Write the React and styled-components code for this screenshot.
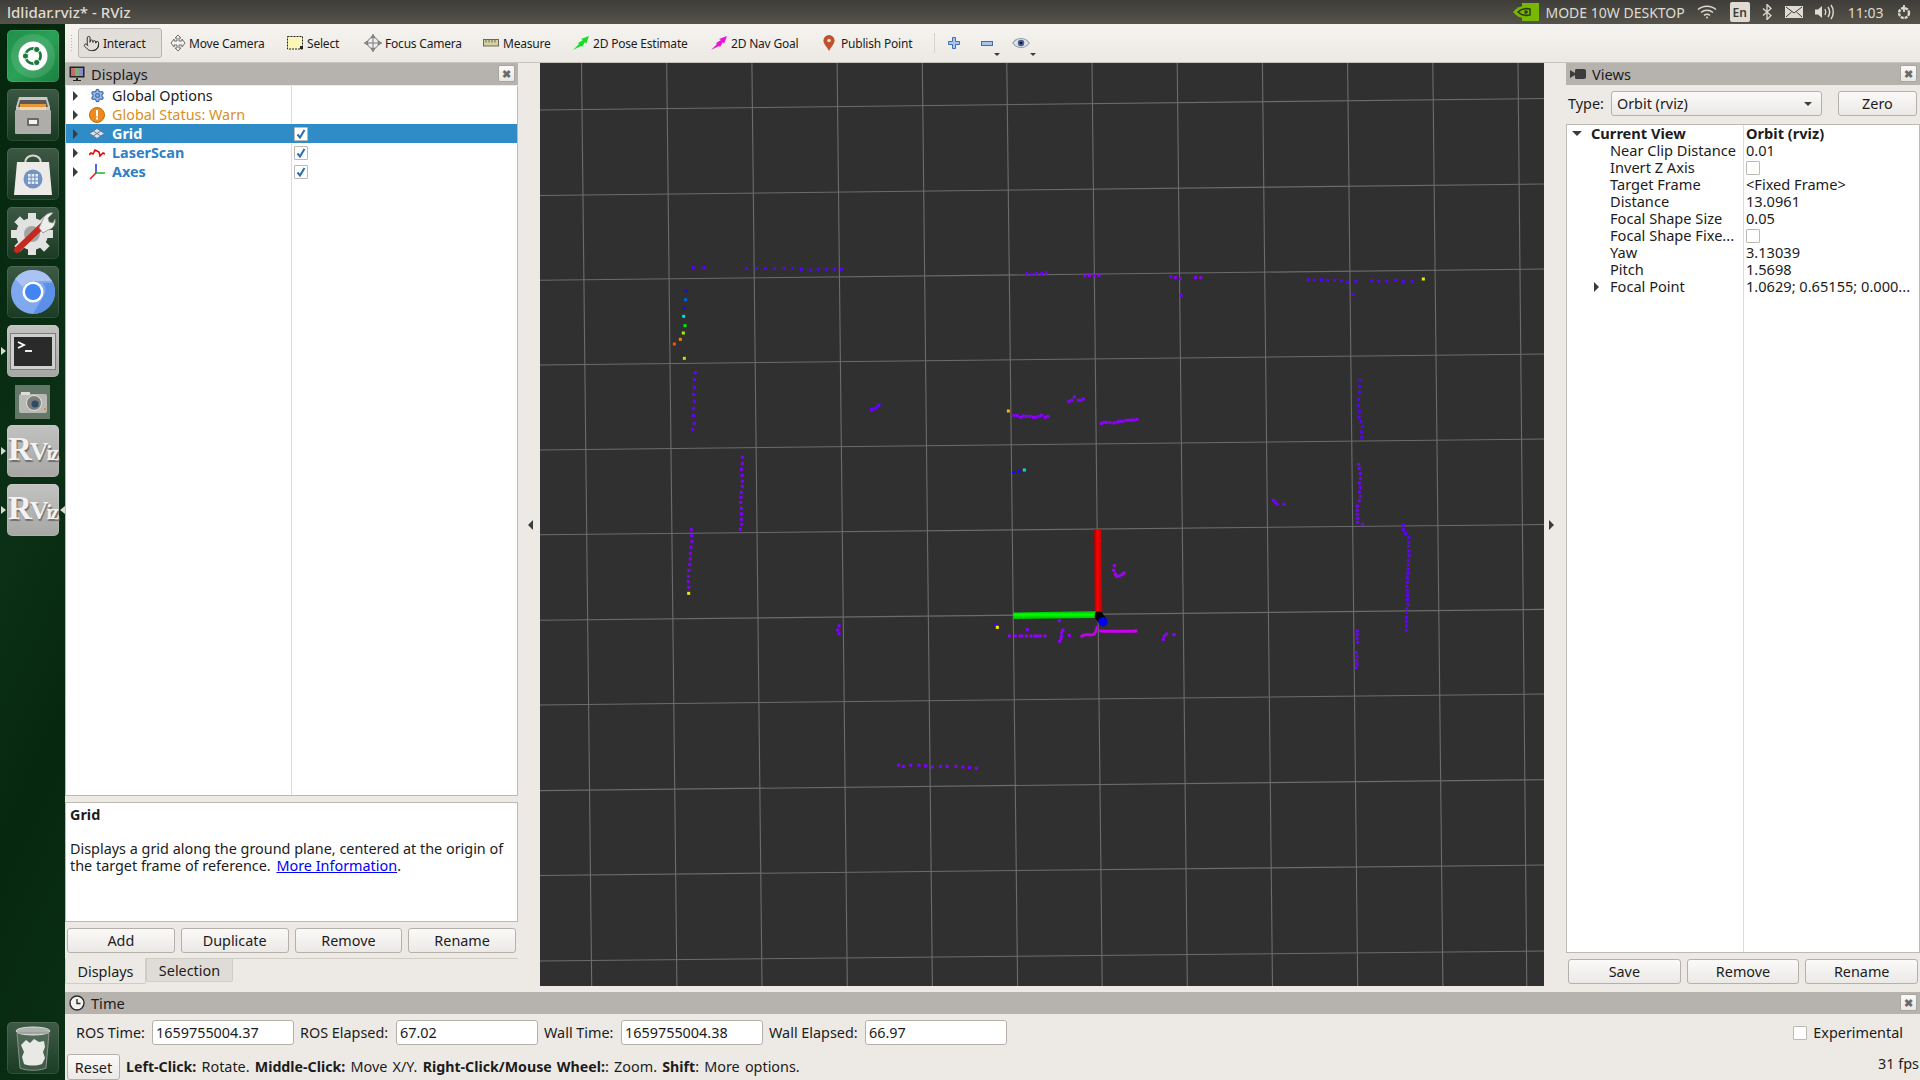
import React from "react";
import styled, { createGlobalStyle } from "styled-components";
import { Pointer, Settings } from "lucide-react";

const GlobalStyle = createGlobalStyle`
  html, body { margin: 0; padding: 0; width: 1920px; height: 1080px; overflow: hidden; }
  body { font-family: "Noto Sans", "Open Sans", sans-serif; font-size: 14.4px; color: #1c1c1c; background: #edeae5; }
  * { box-sizing: border-box; }
`;

const Screen = styled.div`
  width: 1920px;
  height: 1080px;
  display: flex;
  flex-direction: column;
`;

/* ---------- top bar ---------- */
const TopBar = styled.div`
  height: 24px;
  flex: none;
  display: flex;
  align-items: center;
  justify-content: space-between;
  padding: 0 8px 0 7px;
  background: linear-gradient(#3e3d39, #55534a);
  color: #dfdbd2;
`;
const WindowTitle = styled.div`
  font-size: 15px;
  font-weight: 500;
`;
const Tray = styled.div`
  display: flex;
  align-items: center;
  gap: 12.5px;
`;
const TrayText = styled.span`
  font-size: 14px;
  white-space: nowrap;
`;
const LogoSlot = styled.div`
  display: flex;
  margin-right: -6px;
`;
const LangBox = styled.div`
  width: 20px;
  height: 20px;
  border-radius: 2px;
  background: #dfdbd2;
  color: #3c3b37;
  font-size: 12px;
  font-weight: 600;
  display: flex;
  align-items: center;
  justify-content: center;
`;

/* ---------- launcher ---------- */
const Body = styled.div`
  flex: 1;
  display: flex;
  min-height: 0;
`;
const Launcher = styled.div`
  width: 65px;
  flex: none;
  display: flex;
  flex-direction: column;
  align-items: center;
  gap: 7px;
  padding: 6px 0;
  background: linear-gradient(115deg, #04260d, #0b3015 45%, #06280f 70%, #0a2f14);
`;
const Tile = styled.div`
  position: relative;
  width: 52px;
  height: 52px;
  flex: none;
  border-radius: 5px;
  display: flex;
  align-items: center;
  justify-content: center;
  background: ${(p) =>
    p.$kind === "ubuntu"
      ? "linear-gradient(135deg, #1f8f49, #2aa257 50%, #197f3f)"
      : p.$kind === "lit"
      ? "linear-gradient(#c2c2c0, #a6a6a4)"
      : "linear-gradient(rgba(255,255,255,.22), rgba(255,255,255,.07))"};
  box-shadow: inset 0 0 0 1px rgba(255, 255, 255, 0.1);
`;
const CameraTile = styled(Tile)`
  width: 35px;
  height: 34px;
  border-radius: 0;
  margin-top: 1px;
  margin-bottom: -1px;
  background: #64786a;
  box-shadow: none;
`;
const TrashTile = styled(Tile)`
  margin-top: auto;
`;
const Pip = styled.i`
  position: absolute;
  top: 50%;
  margin-top: -4px;
  width: 0;
  height: 0;
  border-top: 4px solid transparent;
  border-bottom: 4px solid transparent;
  ${(p) =>
    p.$side === "right"
      ? "right: -6px; border-right: 5px solid #d8d8d8;"
      : "left: -6px; border-left: 5px solid #d8d8d8;"}
`;
const RvizMark = styled.span`
  font-family: "Liberation Serif", serif;
  font-weight: 700;
  color: #f2f2f2;
  font-size: 26px;
  letter-spacing: -2px;
  line-height: 30px;
  text-shadow: 1px 2px 1px #6e6e6e;
  big { font-size: 33px; }
  small { font-size: 20px; }
`;

/* ---------- main area ---------- */
const Main = styled.div`
  flex: 1;
  min-width: 0;
  display: flex;
  flex-direction: column;
`;
const Toolbar = styled.div`
  height: 39px;
  flex: none;
  display: flex;
  align-items: center;
  padding: 0 0 0 5px;
  border-bottom: 1px solid #c6c2bc;
  background: linear-gradient(#f6f4f0, #ece9e4);
`;
const Grip = styled.div`
  width: 4px;
  height: 18px;
  margin-right: 4px;
  background-image: radial-gradient(#b9b5ae 0.7px, transparent 0.8px);
  background-size: 3px 3px;
`;
const ToolButton = styled.div`
  width: ${(p) => p.$w}px;
  height: 30px;
  flex: none;
  display: flex;
  align-items: center;
  gap: ${(p) => p.$gap || 4}px;
  padding-left: ${(p) => p.$pad || 6}px;
  font-size: 12px;
  letter-spacing: -0.2px;
  white-space: nowrap;
  border-radius: 3px;
  ${(p) => p.$active && "background: #e2dfdb; border: 1px solid #b9b5af; padding-left: 4px;"}
`;
const ToolSep = styled.div`
  width: 1px;
  height: 20px;
  margin: 0 12px 0 4px;
  background: #d6d3cd;
`;
const ToolIcon = styled.div`
  position: relative;
  width: ${(p) => p.$w || 14}px;
  margin-right: ${(p) => p.$mr || 17}px;
  height: 16px;
  display: flex;
  align-items: center;
  justify-content: center;
`;
const MenuCaret = styled.i`
  position: absolute;
  right: -6px;
  bottom: -5px;
  border-left: 3px solid transparent;
  border-right: 3px solid transparent;
  border-top: 3px solid #3c3c3c;
`;

const Dock = styled.div`
  flex: 1;
  min-height: 0;
  display: flex;
`;
const Panel = styled.div`
  width: ${(p) => p.$w}px;
  flex: none;
  display: flex;
  flex-direction: column;
`;
const TitleBar = styled.div`
  height: 22px;
  flex: none;
  display: flex;
  align-items: center;
  gap: 6px;
  padding: 0 3px 0 4px;
  background: #b6b2ae;
  font-size: 14.6px;
  span { flex: 1; }
`;
const CloseBox = styled.div`
  width: 17px;
  height: 17px;
  margin-top: -2px;
  border: 1px solid #a9a5a0;
  border-radius: 2px;
  background: linear-gradient(#fbfaf9, #e9e7e3);
  color: #6a6a6a;
  font-size: 11px;
  font-weight: 700;
  line-height: 15px;
  text-align: center;
`;
const Tree = styled.div`
  flex: ${(p) => p.$flex || "none"};
  height: ${(p) => (p.$h ? `${p.$h}px` : "auto")};
  margin-top: ${(p) => p.$mt || 0}px;
  font-size: ${(p) => p.$fs || 14.4}px;
  background: linear-gradient(#dcdcdc, #dcdcdc) no-repeat ${(p) => p.$col}px 0 / 1px 100%, #fff;
  border: 1px solid #bdb9b3;
  border-top-width: ${(p) => (p.$flat ? 0 : 1)}px;
`;
const Row = styled.div`
  height: ${(p) => p.$h}px;
  line-height: ${(p) => p.$h}px;
  display: grid;
  grid-template-columns: ${(p) => p.$col}px 1fr;
  grid-template-rows: ${(p) => p.$h}px;
  align-items: center;
  background: ${(p) => (p.$selected ? "#308cc6" : "transparent")};
  color: ${(p) => (p.$selected ? "#fff" : p.$color || "#1c1c1c")};
  font-weight: ${(p) => (p.$bold ? 700 : 400)};
  white-space: nowrap;
`;
const NameCell = styled.div`
  display: flex;
  align-items: center;
  padding-left: ${(p) => p.$indent}px;
`;
const ValueCell = styled.div`
  padding-left: 3px;
  display: flex;
  align-items: center;
  color: #1c1c1c;
`;
const RowArrow = styled.i`
  flex: none;
  width: 0;
  height: 0;
  margin-right: ${(p) => p.$mr}px;
  ${(p) =>
    p.$open
      ? "border-left: 5px solid transparent; border-right: 5px solid transparent; border-top: 5px solid #3c3c3c;"
      : "border-top: 5px solid transparent; border-bottom: 5px solid transparent; border-left: 5px solid #3c3c3c;"}
`;
const RowIcon = styled.div`
  width: 16px;
  height: 16px;
  flex: none;
  margin-right: 7px;
  display: flex;
  align-items: center;
  justify-content: center;
`;
const Check = styled.div`
  width: 14px;
  height: 14px;
  flex: none;
  background: #fff;
  border: 1px solid #bdb9b3;
  border-radius: 1px;
  display: flex;
  align-items: center;
  justify-content: center;
`;
const Splitter = styled.div`
  height: ${(p) => p.$h || 6}px;
  flex: none;
`;
const Description = styled.div`
  height: 120px;
  flex: none;
  padding: 3px 4px;
  background: #fff;
  border: 1px solid #bdb9b3;
  line-height: 17px;
  b { display: block; margin-bottom: 17px; }
  a { color: #0000ff; text-decoration: underline; margin-left: 2px; }
`;
const ButtonRow = styled.div`
  display: flex;
  gap: 6px;
  height: 25px;
  flex: none;
  margin-top: 6px;
  padding: 0 2px;
`;
const PushButton = styled.div`
  flex: ${(p) => (p.$w ? "none" : 1)};
  width: ${(p) => (p.$w ? `${p.$w}px` : "auto")};
  height: ${(p) => p.$h || 25}px;
  display: flex;
  align-items: center;
  justify-content: center;
  border: 1px solid #b5b1aa;
  border-radius: 3px;
  background: linear-gradient(#fbfaf9, #ebe9e6);
`;
const TabStrip = styled.div`
  display: flex;
  align-items: flex-start;
  height: 26px;
  flex: none;
  margin-top: 5px;
  border-top: 1px solid #cfccc6;
`;
const Tab = styled.div`
  width: ${(p) => p.$w}px;
  height: ${(p) => (p.$active ? 26 : 24)}px;
  margin-top: -1px;
  display: flex;
  align-items: center;
  justify-content: center;
  background: ${(p) => (p.$active ? "#edeae5" : "#dfdcd8")};
  border: 1px solid #cfccc6;
  border-top-color: ${(p) => (p.$active ? "#edeae5" : "#cfccc6")};
  border-radius: 0 0 2px 2px;
`;
const CollapseGutter = styled.div`
  width: 22px;
  flex: none;
  height: 923px;
  display: flex;
  align-items: center;
  justify-content: center;
  padding: ${(p) => (p.$left ? "0 0 0 3px" : "0 8px 0 0")};
`;
const GutterArrow = styled.i`
  border-top: 5px solid transparent;
  border-bottom: 5px solid transparent;
  ${(p) => (p.$left ? "border-right: 5px solid #3c3c3c;" : "border-left: 5px solid #3c3c3c;")}
`;
const Viewport = styled.svg`
  width: 1004px;
  height: 923px;
  flex: none;
  display: block;
  background: #303030;
`;
const TypeRow = styled.div`
  height: 25px;
  flex: none;
  margin-top: 6px;
  display: flex;
  align-items: center;
  padding-left: 2px;
`;
const Combo = styled.div`
  width: 211px;
  height: 25px;
  margin-left: 7px;
  margin-right: 16px;
  padding: 0 9px 0 5px;
  display: flex;
  align-items: center;
  justify-content: space-between;
  border: 1px solid #b5b1aa;
  border-radius: 3px;
  background: linear-gradient(#fbfaf9, #ebe9e6);
`;
const ComboCaret = styled.i`
  border-left: 4px solid transparent;
  border-right: 4px solid transparent;
  border-top: 4px solid #3c3c3c;
`;

/* ---------- time panel ---------- */
const TimePanel = styled.div`
  height: 88px;
  flex: none;
  margin-top: auto;
  display: flex;
  flex-direction: column;
`;
const TimeRow = styled.div`
  display: flex;
  align-items: center;
  height: 25px;
  margin-top: 6px;
  padding: 0 0 0 11px;
`;
const TimeField = styled.div`
  width: 142px;
  height: 25px;
  margin: 0 6px;
  padding-left: 3px;
  display: flex;
  align-items: center;
  background: #fff;
  border: 1px solid #b5b1aa;
  border-radius: 3px;
  flex: none;
`;
const TimeLabel = styled.span`
  width: ${(p) => p.$w}px;
  flex: none;
  white-space: nowrap;
`;
const Experimental = styled.div`
  margin-left: auto;
  margin-right: 17px;
  display: flex;
  align-items: center;
  gap: 6px;
`;
const StatusRow = styled.div`
  display: flex;
  align-items: center;
  height: 26px;
  margin-top: 9px;
  padding: 0 1px 0 2px;
  white-space: nowrap;
`;
const StatusText = styled.div`
  margin-left: 6px;
  margin-top: -2px;
  flex: 1;
  word-spacing: 1.45px;
  b { font-size: 14.2px; }
`;
const Fps = styled.div`
  margin-top: -8px;
`;

/* ---------- little drawings ---------- */
const GridLines = () => {
  const hLeft = [110, 195.5, 280.3, 365, 450, 534.8, 620.3, 705, 790.6, 875.5, 961];
  const hRight = [98.5, 184, 269, 354, 439, 524.5, 609.4, 694, 779.7, 865, 951];
  const vTop = [581.5, 666.7, 751.9, 837.1, 922.3, 1006.8, 1092, 1177.2, 1262.4, 1347.6, 1432.8, 1518];
  const vBot = [591.7, 676.9, 762, 847.3, 932.4, 1017.6, 1102.2, 1187.3, 1272.5, 1357.7, 1442.9, 1526.8];
  return (
    <g stroke="#6c6c6c" strokeWidth="1.1">
      {hLeft.map((y, i) => <line key={y} x1="540" y1={y} x2="1544" y2={hRight[i]} />)}
      {vTop.map((x, i) => <line key={x} x1={x} y1="63" x2={vBot[i]} y2="986" />)}
    </g>
  );
};

const at = (ox, oy, list) => list.map(([x, y]) => [ox + x / 3, oy + y / 3]);

const scanGroups = [
  ["#5a00ff", at(640, 250, [[160,53],[192,52],[319,55],[349,55],[376,55],[403,55],[433,55],[457,55],[484,58],[511,60],[535,58],[559,58],[583,58],[604,58],[695,477],[710,472],[718,464]])],
  ["#2a00ff", at(640, 250, [[139,122],[133,175]])],
  ["#0060e0", at(640, 250, [[137,149]])],
  ["#00e0e0", at(640, 250, [[131,199]])],
  ["#00f000", at(640, 250, [[135,227]])],
  ["#a8f000", at(640, 250, [[130,249],[133,325]])],
  ["#ff8000", at(640, 250, [[121,268]])],
  ["#ff5000", at(640, 250, [[103,282]])],
  ["#6a00ff", at(640, 250, [[166,368],[163,389],[163,412],[161,433],[163,455],[160,476],[160,497],[163,520],[158,538]])],
  ["#8000ff", at(640, 250, [[307,622],[307,641],[304,658],[306,676],[307,694],[307,709],[304,727],[303,742],[302,757],[304,775],[304,791],[304,808],[305,823],[301,838],[154,839],[155,857],[156,874],[153,892],[151,910],[151,927],[149,943],[147,961],[145,979],[145,995],[146,1012]])],
  ["#e8f000", at(640, 250, [[146,1030]])],
  ["#7000ff", at(1000, 250, [[80,71],[95,73],[109,70],[125,71],[139,69],[512,80],[543,136]])],
  ["#8800ff", at(1000, 250, [[254,77],[268,77],[283,77],[297,76],[526,83],[541,86],[42,496],[52,497],[62,502],[70,498],[80,499],[90,499],[100,502],[108,502],[117,499],[125,496],[136,502],[144,499],[207,455],[215,451],[223,441],[235,451],[242,451],[250,447]])],
  ["#9000ff", at(1000, 250, [[587,83],[602,83],[304,520],[312,517],[320,517],[330,518],[342,519],[352,516],[360,514],[368,514],[378,511],[386,511],[394,510],[402,510],[411,508]])],
  ["#5a00ff", at(1000, 250, [[925,88],[943,90],[964,89],[983,91],[1003,91],[1024,92],[1043,97],[1068,94],[1114,92],[1136,94],[1160,94],[1187,91],[1210,95],[1237,94],[1059,133],[1079,391],[1079,409],[1079,427],[1076,448],[1075,467],[1078,484],[1077,502],[1082,515],[1087,529],[1084,546],[1086,562]])],
  ["#e8f000", at(1000, 250, [[1270,87]])],
  ["#ffb000", at(1000, 250, [[25,483]])],
  ["#7400ff", at(1260, 360, [[296,313],[298,326],[301,340],[301,355],[298,369],[301,382],[298,396],[301,409],[298,422],[292,438],[292,451],[292,463],[293,475],[293,487],[308,493],[40,421],[46,427],[52,433],[72,433],[292,813],[292,823],[291,835],[293,847],[289,877],[291,889],[289,901],[291,912],[289,923]])],
  ["#6400ff", at(1260, 360, [[430,495],[430,509],[437,521],[447,532],[446,547],[445,559],[447,573],[447,586],[445,601],[445,614],[445,628],[444,640],[442,654],[442,667],[440,679],[442,693],[442,706],[442,719],[444,733],[440,746],[440,758],[439,772],[440,785],[440,798],[439,811]])],
  ["#4a00ff", at(960, 500, [[106,374]])],
  ["#f0f000", at(960, 500, [[112,382]])],
  ["#9000ff", at(960, 500, [[202,389],[148,408],[166,408],[180,408],[186,408],[199,408],[213,408],[225,408],[233,408],[241,408],[255,408],[298,362],[309,390],[305,398],[305,408],[303,416],[299,424],[328,406],[610,418],[613,408],[620,402],[642,404]])],
  ["#a400ff", at(960, 500, [[463,197],[461,211],[466,222],[470,229],[478,228],[486,224],[492,219]])],
  ["#8000ff", [[839.1,625.8],[837.8,630],[839.1,633.6],[898.6,765.2],[903.4,766.4],[910.8,765.2],[918.9,765.2],[925.7,765.8],[932.4,767],[940.6,766.4],[947.3,766.4],[956.1,766.4],[962.9,767],[969.6,767.6],[976.4,768.2]]],
  ["#6a00ff", [[875,408.8],[878.4,405.8],[871.6,410]]],
  ["#2000ff", [[1013.6,472.4],[1019,471.2]]],
  ["#00e0c0", [[1024.4,470]]],
];

const LaserPoints = () => (
  <g>
    {scanGroups.map(([color, pts], i) => (
      <g key={i} fill={color}>
        {pts.map(([x, y], j) => <rect key={j} x={x - 1.5} y={y - 1.5} width="3" height="3" />)}
      </g>
    ))}
    <polyline
      fill="none"
      stroke="#c400f0"
      strokeWidth="2.8"
      points="1080.7,637 1083.3,635.3 1086.7,634.7 1090.7,635 1094,634.3 1096,631.3 1096.7,628.3 1097.3,626"
    />
    <polyline fill="none" stroke="#cc00f0" strokeWidth="3" points="1099.3,630.7 1103.3,631.3 1113,631.3 1125,631.3 1134,631.3 1137.3,630.7" />
  </g>
);

const AxesMarker = () => (
  <g>
    <defs>
      <linearGradient id="redAxis" x1="0" x2="1" y1="0" y2="0">
        <stop offset="0" stopColor="#a00000" />
        <stop offset="0.4" stopColor="#ff0000" />
        <stop offset="1" stopColor="#b80000" />
      </linearGradient>
      <linearGradient id="greenAxis" x1="0" x2="0" y1="0" y2="1">
        <stop offset="0" stopColor="#00b000" />
        <stop offset="0.45" stopColor="#00ff00" />
        <stop offset="1" stopColor="#00b400" />
      </linearGradient>
    </defs>
    <polygon points="1094,529.3 1101.3,529.3 1102.3,612 1094.7,612" fill="url(#redAxis)" />
    <polygon points="1013.3,612.6 1095.5,611 1095.5,618 1013.3,619" fill="url(#greenAxis)" />
    <line x1="1098.8" y1="615.6" x2="1102.8" y2="621" stroke="#000" strokeWidth="8.5" strokeLinecap="round" />
    <circle cx="1103" cy="621.7" r="4.7" fill="#0000f0" />
  </g>
);

const UbuntuIcon = () => (
  <svg width="46" height="46" viewBox="0 0 46 46">
    <circle cx="23" cy="23" r="22" fill="#fff" opacity="0.12" />
    <circle cx="23" cy="23" r="14.5" fill="#fff" />
    <circle cx="23" cy="23" r="7.6" fill="none" stroke="#1a7a3c" strokeWidth="2.8" />
    <circle cx="15.5" cy="23" r="3.1" fill="#1a7a3c" stroke="#fff" strokeWidth="1" />
    <circle cx="26.7" cy="16.5" r="3.1" fill="#1a7a3c" stroke="#fff" strokeWidth="1" />
    <circle cx="26.7" cy="29.5" r="3.1" fill="#1a7a3c" stroke="#fff" strokeWidth="1" />
  </svg>
);
const FilesIcon = () => (
  <svg width="42" height="42" viewBox="0 0 42 42">
    <path d="M7 3h28l3 10v27H4V13z" fill="#c9c8c4" />
    <path d="M8 6h26l2 7H6z" fill="#5c5a56" />
    <path d="M8 10h26v5H8z" fill="#e8963c" />
    <path d="M8 13h26v3H8z" fill="#f2d9a8" />
    <rect x="3" y="16" width="36" height="24" rx="1" fill="#aeada9" />
    <rect x="15" y="24" width="12" height="8" rx="1" fill="#6c6a66" />
    <rect x="17" y="26" width="8" height="4" fill="#f4f4f2" />
  </svg>
);
const ShopIcon = () => (
  <svg width="42" height="46" viewBox="0 0 42 46">
    <path d="M13 12c0-10 16-10 16 0" fill="none" stroke="#d8d6d0" strokeWidth="2" />
    <path d="M5 11h32l3 33H2z" fill="#ecebe7" />
    <circle cx="21" cy="28" r="9.5" fill="#7494c4" />
    <g fill="#e6ecf5">
      <rect x="16" y="23" width="2.6" height="2.6" /><rect x="19.7" y="23" width="2.6" height="2.6" /><rect x="23.4" y="23" width="2.6" height="2.6" />
      <rect x="16" y="26.7" width="2.6" height="2.6" /><rect x="19.7" y="26.7" width="2.6" height="2.6" /><rect x="23.4" y="26.7" width="2.6" height="2.6" />
      <rect x="16" y="30.4" width="2.6" height="2.6" /><rect x="19.7" y="30.4" width="2.6" height="2.6" /><rect x="23.4" y="30.4" width="2.6" height="2.6" />
    </g>
  </svg>
);
const ToolsIcon = () => (
  <svg width="46" height="46" viewBox="0 0 46 46">
    <g fill="#e2e2e0">
      <circle cx="22" cy="24" r="16" />
      {[0, 45, 90, 135, 180, 225, 270, 315].map((a) => (
        <rect key={a} x="18" y="3" width="8" height="8" transform={`rotate(${a} 22 24)`} />
      ))}
    </g>
    <circle cx="22" cy="24" r="8" fill="#a4a4a2" />
    <path d="M7 40 L32 16" stroke="#c42a20" strokeWidth="6" strokeLinecap="round" />
    <path d="M29 18 L34 7c2-3 6-5 9-4l-5 5 1 4 4 1 2-4c1 5-2 10-7 11l-5 3z" fill="#eeeeec" stroke="#8a8a88" strokeWidth="0.8" />
  </svg>
);
const ChromiumIcon = () => (
  <svg width="46" height="46" viewBox="0 0 46 46">
    <circle cx="23" cy="23" r="22" fill="#7fa8ee" />
    <path d="M23 1a22 22 0 0 1 19 11H23a11 11 0 0 0-10 6L5 10A22 22 0 0 1 23 1z" fill="#a9c4f2" />
    <path d="M43 14a22 22 0 0 1-20 31l10-17a11 11 0 0 0 0-14z" fill="#5c8fe8" />
    <circle cx="23" cy="23" r="10.5" fill="#fff" />
    <circle cx="23" cy="23" r="8" fill="#4285f4" />
  </svg>
);
const TerminalIcon = () => (
  <svg width="46" height="37" viewBox="0 0 46 37">
    <rect x="0.5" y="0.5" width="45" height="36" fill="#cfcfcd" stroke="#7e7e7c" />
    <rect x="4" y="4" width="38" height="29" fill="#2a2a2a" />
    <path d="M8 9l6 3-6 3" fill="none" stroke="#fff" strokeWidth="1.8" />
    <path d="M15 18h7" stroke="#fff" strokeWidth="1.8" />
  </svg>
);
const CameraIcon = () => (
  <svg width="30" height="24" viewBox="0 0 30 24">
    <rect x="1" y="4" width="28" height="19" rx="2" fill="#b9bab6" />
    <rect x="3" y="2" width="9" height="3" fill="#dcdcda" />
    <circle cx="16" cy="13" r="7.5" fill="#7d7e7a" stroke="#e4e4e2" />
    <circle cx="17" cy="14" r="3.5" fill="#2a4a6a" />
    <rect x="26" y="18" width="2" height="2" fill="#e88a20" />
  </svg>
);
const TrashIcon = () => (
  <svg width="38" height="46" viewBox="0 0 38 46">
    <ellipse cx="19" cy="6" rx="17" ry="4" fill="#aeb2ae" stroke="#dcdcda" />
    <path d="M3 8l3 35c7 3 19 3 26 0l3-35z" fill="rgba(255,255,255,.14)" stroke="#8e908c" />
    <path d="M7 20l5-5 4 3 4-4 5 3 5-1 1 6-2 5 2 6-3 6c-6 2-13 2-18 0l-2-7 2-5z" fill="#e8e8e4" />
  </svg>
);
const MoveIcon = () => (
  <svg width="18" height="18" viewBox="0 0 18 18" fill="#f2f2f0" stroke="#6e6e6e">
    <path d="M9 1l3 3h-2v3h3V5l3 4-3 4v-2h-3v3h2l-3 3-3-3h2v-3H5v2L2 9l3-4v2h3V4H6z" />
  </svg>
);
const SelectIcon = () => (
  <svg width="16" height="14" viewBox="0 0 16 14">
    <rect x="0.5" y="0.5" width="15" height="12.5" fill="#fbf5b8" stroke="#222" strokeDasharray="2 1" />
    <path d="M13 10h3v3h-3z" fill="#222" />
  </svg>
);
const FocusIcon = () => (
  <svg width="18" height="18" viewBox="0 0 18 18" fill="none" stroke="#7a7a7a">
    <circle cx="9" cy="9" r="5.5" fill="#eee" />
    <path d="M9 0.5v17M0.5 9h17" />
    <path d="M9 0.5l-2 3h4zM9 17.5l-2-3h4zM0.5 9l3-2v4zM17.5 9l-3-2v4z" fill="#9a9a9a" />
  </svg>
);
const RulerIcon = () => (
  <svg width="16" height="8" viewBox="0 0 16 8">
    <rect x="0.5" y="0.5" width="15" height="6.5" fill="#d8cfa0" stroke="#6a6a5a" />
    <path d="M3 1v2.5M6 1v2.5M9 1v2.5M12 1v2.5" stroke="#6a6a5a" />
  </svg>
);
const GoalArrow = ({ color }) => (
  <svg width="16" height="14" viewBox="0 0 16 14">
    <path d="M0 14l6-6 -1-1 5-3-2-1 8-3-3 8-1-2-3 5-1-1z" fill={color} />
  </svg>
);
const PinIcon = () => (
  <svg width="12" height="16" viewBox="0 0 12 16">
    <path d="M6 0a5.6 5.6 0 0 1 5.6 5.6C11.6 9 8 12 6 16 4 12 .4 9 .4 5.6A5.6 5.6 0 0 1 6 0z" fill="#c2502a" />
    <circle cx="6" cy="5.5" r="1.8" fill="#f3ddd0" />
  </svg>
);
const PlusIcon = () => (
  <svg width="12" height="12" viewBox="0 0 12 12">
    <path d="M4.5 0.5h3v4h4v3h-4v4h-3v-4h-4v-3h4z" fill="#a8c4e8" stroke="#3f70b5" />
  </svg>
);
const MinusIcon = () => (
  <svg width="12" height="5" viewBox="0 0 12 5">
    <rect x="0.5" y="0.5" width="11" height="4" fill="#a8c4e8" stroke="#3f70b5" />
  </svg>
);
const EyeIcon = () => (
  <svg width="18" height="12" viewBox="0 0 16 11">
    <path d="M0.5 5.5C4 0 12 0 15.5 5.5 12 11 4 11 0.5 5.5z" fill="#dfe3ea" stroke="#9aa0aa" />
    <circle cx="8" cy="5.5" r="3" fill="#4a5f92" />
    <circle cx="8" cy="5.5" r="1.2" fill="#10182a" />
  </svg>
);
const MonitorIcon = () => (
  <svg width="16" height="16" viewBox="0 0 16 16">
    <rect x="0.5" y="0.5" width="15" height="11" fill="#222" />
    <rect x="2" y="2" width="4" height="8" fill="#c46a6a" />
    <rect x="6" y="2" width="4" height="8" fill="#7ab07a" />
    <rect x="10" y="2" width="4" height="8" fill="#8a8ac8" />
    <path d="M7 12h2v2h3v1H4v-1h3z" fill="#222" />
  </svg>
);
const ViewsIcon = () => (
  <svg width="16" height="10" viewBox="0 0 16 10">
    <path d="M0 1l5 3V1.5C5 .6 5.6 0 6.5 0H14c1.1 0 2 .9 2 2v6c0 1.1-.9 2-2 2H6.5C5.6 10 5 9.4 5 8.5V6L0 9z" fill="#3c3c3c" />
  </svg>
);
const ClockIcon = () => (
  <svg width="16" height="16" viewBox="0 0 16 16">
    <circle cx="8" cy="8" r="7" fill="#f4f3f0" stroke="#2c2c2c" strokeWidth="1.4" />
    <path d="M8 4v4.5h3.5" fill="none" stroke="#2c2c2c" strokeWidth="1.4" />
  </svg>
);
const WarnIcon = () => (
  <svg width="16" height="16" viewBox="0 0 16 16">
    <circle cx="8" cy="8" r="7.5" fill="#ee8a1c" stroke="#c46a10" />
    <rect x="7" y="3" width="2" height="6.5" fill="#fff" />
    <rect x="7" y="10.5" width="2" height="2" fill="#fff" />
  </svg>
);
const GridIcon = () => (
  <svg width="16" height="11" viewBox="0 0 16 11" fill="none" stroke="#5f7890">
    <path d="M8 .5l7.5 5L8 10.5 .5 5.5z" fill="#d7e4f0" />
    <path d="M4.2 3l7.5 5M11.8 3L4.3 8" />
  </svg>
);
const LaserIcon = () => (
  <svg width="16" height="10" viewBox="0 0 16 10" fill="none" stroke="#ee0000" strokeWidth="1.6">
    <path d="M0 7l2-2 2 1 2-4 2 1 2 1 1 4 3-3 2 1" />
  </svg>
);
const AxesIcon = () => (
  <svg width="16" height="16" viewBox="0 0 16 16" fill="none" strokeWidth="1.5">
    <path d="M7 9V0" stroke="#2030e0" />
    <path d="M7 9h9" stroke="#20b030" />
    <path d="M7 9l-6 6" stroke="#e01010" />
  </svg>
);
const Tick = () => (
  <svg width="10" height="10" viewBox="0 0 10 10" fill="none" stroke="#2a6cb0" strokeWidth="2">
    <path d="M1.5 5.5l2.5 3L8.5 1" />
  </svg>
);
const WifiIcon = () => (
  <svg width="20" height="14" viewBox="0 0 20 14" fill="none" stroke="#dfdbd2" strokeWidth="1.5">
    <path d="M1 4.5c5-4.5 13-4.5 18 0M4 7.5c3.5-3 8.5-3 12 0M7 10.3c2-1.5 4-1.5 6 0" />
    <circle cx="10" cy="12.5" r="1" fill="#dfdbd2" stroke="none" />
  </svg>
);
const BluetoothIcon = () => (
  <svg width="10" height="16" viewBox="0 0 10 16" fill="none" stroke="#dfdbd2" strokeWidth="1.3">
    <path d="M1 4.5l8 7-4 4V.5l4 4-8 7" />
  </svg>
);
const MailIcon = () => (
  <svg width="18" height="12" viewBox="0 0 18 12">
    <rect width="18" height="12" fill="#dfdbd2" />
    <path d="M1 1l8 6 8-6M1 11l5.5-5M17 11l-5.5-5" fill="none" stroke="#3c3b37" />
  </svg>
);
const VolumeIcon = () => (
  <svg width="20" height="16" viewBox="0 0 20 16" fill="none" stroke="#dfdbd2" strokeWidth="1.4">
    <path d="M0 5.5h3L7 2v12l-4-3.5H0z" fill="#dfdbd2" stroke="none" />
    <path d="M10 5c1 2 1 4 0 6M13 3c2 3 2 7 0 10M16 1c3 4 3 10 0 14" />
  </svg>
);
const PowerIcon = () => (
  <svg width="16" height="16" viewBox="0 0 16 16" fill="none" stroke="#dfdbd2">
    <circle cx="8" cy="9" r="5" strokeWidth="2.4" strokeDasharray="3 1" />
    <path d="M8 1v7" strokeWidth="1.8" />
  </svg>
);
const NvidiaIcon = () => (
  <svg width="26" height="18" viewBox="0 0 26 18">
    <path d="M9 0h17v18H9z" fill="#76b900" />
    <path d="M0 9c4-5 10-7 15-6v12C9 16 4 14 0 9z" fill="#76b900" />
    <path d="M5 9c3-3 7-4 12-3v6c-5 1-9 0-12-3z" fill="none" stroke="#2e3a14" strokeWidth="1.5" />
    <circle cx="13" cy="9" r="1.8" fill="#2e3a14" />
  </svg>
);

/* ---------- data ---------- */
const tools = [
  { label: "Interact", w: 84, active: true, gap: 3, icon: <Pointer size={17} strokeWidth={1.3} color="#222" /> },
  { label: "Move Camera", w: 118, pad: 7, gap: 2, icon: <MoveIcon /> },
  { label: "Select", w: 77, pad: 7, icon: <SelectIcon /> },
  { label: "Focus Camera", w: 119, pad: 7, gap: 3, icon: <FocusIcon /> },
  { label: "Measure", w: 90, pad: 7, gap: 4, icon: <RulerIcon /> },
  { label: "2D Pose Estimate", w: 138, pad: 7, icon: <GoalArrow color="#12e020" /> },
  { label: "2D Nav Goal", w: 112, pad: 7, icon: <GoalArrow color="#f010d8" /> },
  { label: "Publish Point", w: 114, pad: 7, gap: 6, icon: <PinIcon /> },
];

const displayRows = [
  { label: "Global Options", icon: <Settings size={15} strokeWidth={2} color="#3f6fb5" fill="#9dbbe2" /> },
  { label: "Global Status: Warn", icon: <WarnIcon />, color: "#d9901e" },
  { label: "Grid", icon: <GridIcon />, bold: true, selected: true, check: true, color: "#fff" },
  { label: "LaserScan", icon: <LaserIcon />, bold: true, check: true, color: "#2f7fc5" },
  { label: "Axes", icon: <AxesIcon />, bold: true, check: true, color: "#2f7fc5" },
];

const viewRows = [
  { name: "Near Clip Distance", value: "0.01" },
  { name: "Invert Z Axis", check: true },
  { name: "Target Frame", value: "<Fixed Frame>" },
  { name: "Distance", value: "13.0961" },
  { name: "Focal Shape Size", value: "0.05" },
  { name: "Focal Shape Fixe...", check: true },
  { name: "Yaw", value: "3.13039" },
  { name: "Pitch", value: "1.5698" },
];

export default function App() {
  return (
    <Screen>
      <GlobalStyle />
      <TopBar>
        <WindowTitle>ldlidar.rviz* - RViz</WindowTitle>
        <Tray>
          <LogoSlot><NvidiaIcon /></LogoSlot>
          <TrayText>MODE 10W DESKTOP</TrayText>
          <WifiIcon />
          <LangBox>En</LangBox>
          <BluetoothIcon />
          <MailIcon />
          <VolumeIcon />
          <TrayText>11:03</TrayText>
          <PowerIcon />
        </Tray>
      </TopBar>
      <Body>
        <Launcher>
          <Tile $kind="ubuntu"><UbuntuIcon /></Tile>
          <Tile><FilesIcon /></Tile>
          <Tile><ShopIcon /></Tile>
          <Tile><ToolsIcon /></Tile>
          <Tile><ChromiumIcon /></Tile>
          <Tile $kind="lit"><Pip /><TerminalIcon /></Tile>
          <CameraTile><CameraIcon /></CameraTile>
          <Tile $kind="lit"><Pip /><RvizMark><big>R</big>V<small>iz</small></RvizMark></Tile>
          <Tile $kind="lit"><Pip /><Pip $side="right" /><RvizMark><big>R</big>V<small>iz</small></RvizMark></Tile>
          <TrashTile><TrashIcon /></TrashTile>
        </Launcher>
        <Main>
          <Toolbar>
            <Grip />
            {tools.map((t) => (
              <ToolButton key={t.label} $w={t.w} $active={t.active} $pad={t.pad} $gap={t.gap}>
                {t.icon}
                {t.label}
              </ToolButton>
            ))}
            <ToolSep />
            <ToolIcon $mr={19}><PlusIcon /></ToolIcon>
            <ToolIcon $mr={18}><MinusIcon /><MenuCaret /></ToolIcon>
            <ToolIcon $w={18}><EyeIcon /><MenuCaret /></ToolIcon>
          </Toolbar>
          <Dock>
            <Panel $w={453}>
              <TitleBar>
                <MonitorIcon />
                <span>Displays</span>
                <CloseBox>✖</CloseBox>
              </TitleBar>
              <Tree $h={710} $col={225} $flat $mt={1}>
                {displayRows.map((r) => (
                  <Row key={r.label} $h={19} $col={225} $selected={r.selected} $bold={r.bold} $color={r.color}>
                    <NameCell $indent={7}>
                      <RowArrow $mr={11} />
                      <RowIcon>{r.icon}</RowIcon>
                      {r.label}
                    </NameCell>
                    {r.check && <ValueCell><Check><Tick /></Check></ValueCell>}
                  </Row>
                ))}
              </Tree>
              <Splitter />
              <Description>
                <b>Grid</b>
                Displays a grid along the ground plane, centered at the origin of
                <br />
                the target frame of reference. <a href="#more">More Information</a>.
              </Description>
              <ButtonRow>
                <PushButton>Add</PushButton>
                <PushButton>Duplicate</PushButton>
                <PushButton>Remove</PushButton>
                <PushButton>Rename</PushButton>
              </ButtonRow>
              <TabStrip>
                <Tab $w={81} $active>Displays</Tab>
                <Tab $w={87}>Selection</Tab>
              </TabStrip>
            </Panel>
            <CollapseGutter $left><GutterArrow $left /></CollapseGutter>
            <Viewport viewBox="540 63 1004 923">
              <GridLines />
              <LaserPoints />
              <AxesMarker />
            </Viewport>
            <CollapseGutter><GutterArrow /></CollapseGutter>
            <Panel $w={354}>
              <TitleBar>
                <ViewsIcon />
                <span>Views</span>
                <CloseBox>✖</CloseBox>
              </TitleBar>
              <TypeRow>
                Type:
                <Combo>Orbit (rviz)<ComboCaret /></Combo>
                <PushButton $w={79}>Zero</PushButton>
              </TypeRow>
              <Tree $flex="1" $col={176} $mt={8} $fs={14.6}>
                <Row $h={17} $col={176} $bold>
                  <NameCell $indent={5}>
                    <RowArrow $open $mr={9} />
                    Current View
                  </NameCell>
                  <ValueCell>Orbit (rviz)</ValueCell>
                </Row>
                {viewRows.map((r) => (
                  <Row key={r.name} $h={17} $col={176}>
                    <NameCell $indent={43}>{r.name}</NameCell>
                    <ValueCell>{r.check ? <Check /> : r.value}</ValueCell>
                  </Row>
                ))}
                <Row $h={17} $col={176}>
                  <NameCell $indent={27}>
                    <RowArrow $mr={11} />
                    Focal Point
                  </NameCell>
                  <ValueCell>1.0629; 0.65155; 0.000...</ValueCell>
                </Row>
              </Tree>
              <ButtonRow>
                <PushButton>Save</PushButton>
                <PushButton>Remove</PushButton>
                <PushButton>Rename</PushButton>
              </ButtonRow>
              <Splitter $h={8} />
            </Panel>
          </Dock>
          <TimePanel>
            <TitleBar>
              <ClockIcon />
              <span>Time</span>
              <CloseBox>✖</CloseBox>
            </TitleBar>
            <TimeRow>
              <TimeLabel $w={70}>ROS Time:</TimeLabel>
              <TimeField>1659755004.37</TimeField>
              <TimeLabel $w={90}>ROS Elapsed:</TimeLabel>
              <TimeField>67.02</TimeField>
              <TimeLabel $w={71}>Wall Time:</TimeLabel>
              <TimeField>1659755004.38</TimeField>
              <TimeLabel $w={90}>Wall Elapsed:</TimeLabel>
              <TimeField>66.97</TimeField>
              <Experimental><Check />Experimental</Experimental>
            </TimeRow>
            <StatusRow>
              <PushButton $w={53} $h={26}>Reset</PushButton>
              <StatusText>
                <b>Left-Click:</b> Rotate. <b>Middle-Click:</b> Move X/Y. <b>Right-Click/Mouse Wheel:</b>: Zoom. <b>Shift</b>: More options.
              </StatusText>
              <Fps>31 fps</Fps>
            </StatusRow>
          </TimePanel>
        </Main>
      </Body>
    </Screen>
  );
}
